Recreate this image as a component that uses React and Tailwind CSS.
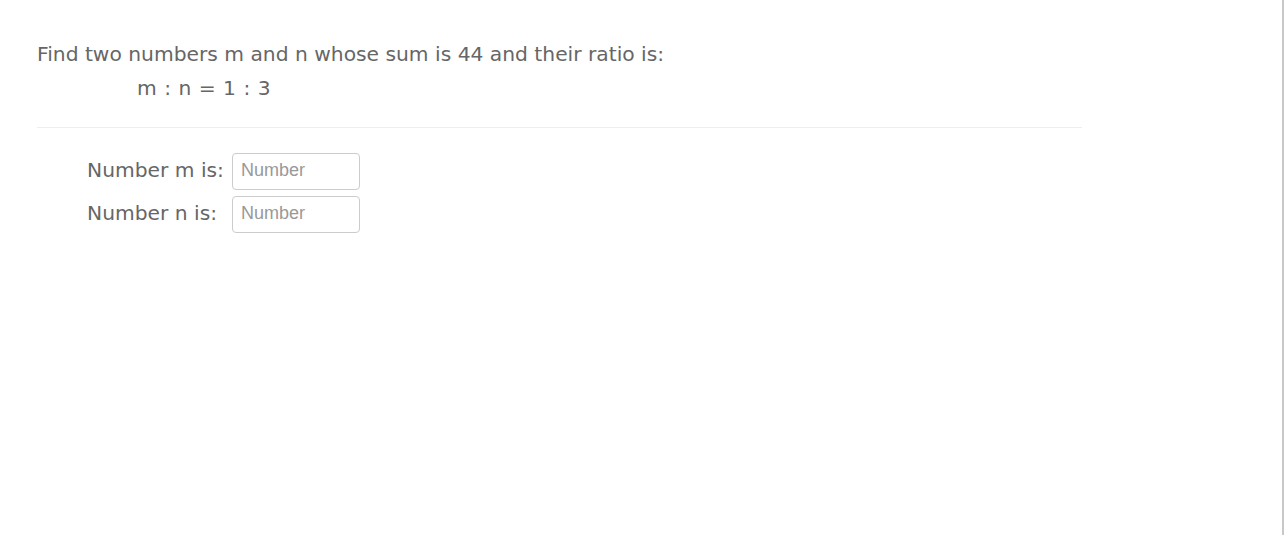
export default function App() {
  return (
    <div className="relative w-[1285px] h-[535px] bg-white overflow-hidden">
      <div className="absolute right-[1px] top-0 bottom-0 w-[2px] bg-[#c8c8c8]" />
      <div className="pl-[37px] pt-[41px] w-[1082px] font-['DejaVu_Sans',sans-serif] text-[#666666] text-[20.25px]">
        <p className="leading-[26px]">Find two numbers m and n whose sum is 44 and their ratio is:</p>
        <p className="leading-[26px] mt-[8px] pl-[100px] [word-spacing:1px]">m : n = 1 : 3</p>
        <div className="mt-[26px] h-px bg-[#eeeeee]" />
        <div className="pl-[50px] pt-[25px] flex flex-col gap-[6px]">
          <div className="flex items-center">
            <span className="w-[145px] leading-[26px] mb-[3px]">Number m is:</span>
            <input
              placeholder="Number"
              className="w-[128px] h-[37px] border border-[#cccccc] rounded-[4px] px-[8px] pb-[2px] text-[18px] font-['Liberation_Sans',sans-serif] placeholder:text-[#999999] outline-none"
            />
          </div>
          <div className="flex items-center">
            <span className="w-[145px] leading-[26px] mb-[3px]">Number n is:</span>
            <input
              placeholder="Number"
              className="w-[128px] h-[37px] border border-[#cccccc] rounded-[4px] px-[8px] pb-[2px] text-[18px] font-['Liberation_Sans',sans-serif] placeholder:text-[#999999] outline-none"
            />
          </div>
        </div>
      </div>
    </div>
  );
}
